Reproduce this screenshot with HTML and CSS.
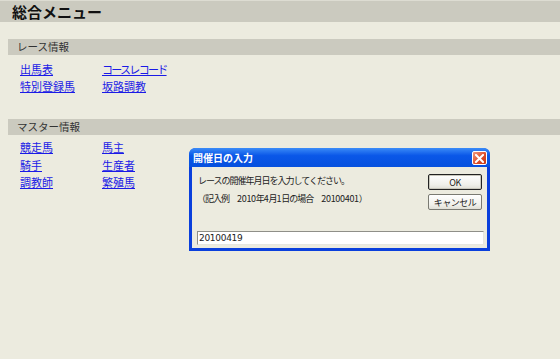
FILE: index.html
```html
<!DOCTYPE html>
<html lang="ja">
<head>
    <meta charset="UTF-8">
    <meta name="viewport" content="width=device-width, initial-scale=1.0">
    <title>総合メニュー</title>
    <link rel="stylesheet" href="styles.css">
</head>
<body>
<h1 class="page-title">総合メニュー</h1>

<div class="section">
    <div class="section-bar">レース情報</div>
    <div class="links">
        <a href="#">出馬表</a>
        <a href="#" class="kana">コースレコード</a>
        <a href="#">特別登録馬</a>
        <a href="#">坂路調教</a>
    </div>
</div>

<div class="section section-master">
    <div class="section-bar">マスター情報</div>
    <div class="links">
        <a href="#">競走馬</a>
        <a href="#">馬主</a>
        <a href="#">騎手</a>
        <a href="#">生産者</a>
        <a href="#">調教師</a>
        <a href="#">繁殖馬</a>
    </div>
</div>

<div class="dialog">
    <div class="dialog-title">
        <span>開催日の入力</span>
        <button class="close-btn" title="閉じる">
            <svg width="9" height="9" viewBox="0 0 9 9">
                <path d="M1 1 L8 8 M8 1 L1 8" stroke="#fff" stroke-width="2" stroke-linecap="square"/>
            </svg>
        </button>
    </div>
    <div class="dialog-body">
        <div class="dialog-row">
            <div class="dialog-text">
                <p>レースの開催年月日を入力してください。</p>
                <p>（記入例　<span class="num">2010</span>年<span class="num">4</span>月<span class="num">1</span>日の場合　<span class="num">20100401</span>）</p>
            </div>
            <div class="dialog-buttons">
                <button class="btn btn-default">OK</button>
                <button class="btn">キャンセル</button>
            </div>
        </div>
        <input type="text" class="dialog-input" value="20100419">
    </div>
</div>
</body>
</html>
```

FILE: styles.css
```css
body {
    margin: 0;
    background: #ecebdf;
    font-family: "Noto Sans CJK JP", "DejaVu Sans", sans-serif;
    font-size: 11px;
    color: #222;
    height: 359px;
}

.page-title {
    margin: 0;
    height: 21px;
    line-height: 21px;
    background: #cbcabf;
    border-top: 1px solid #dddcd2;
    padding-left: 12px;
    font-size: 15px;
    font-weight: bold;
    color: #111;
}

.section {
    margin-top: 17px;
}

.section-master {
    margin-top: 24px;
}

.section-bar {
    margin-left: 8px;
    height: 16px;
    line-height: 16px;
    padding-left: 9px;
    background: #cbcabf;
    font-size: 10.5px;
    color: #333;
}

.links {
    display: grid;
    grid-template-columns: 82px 120px;
    grid-auto-rows: 17px;
    padding: 6px 0 0 20px;
}

.section-master .links {
    grid-auto-rows: 17.5px;
    padding-top: 4px;
}

.links a {
    color: #1a1ae6;
    text-decoration: underline;
    font-size: 11px;
    line-height: 17px;
    justify-self: start;
}

.links a.kana {
    letter-spacing: -1.7px;
}

.dialog {
    position: absolute;
    left: 189px;
    top: 148px;
    width: 301px;
    height: 103px;
    box-sizing: border-box;
    background: #0a3fdc;
    border-radius: 7px 7px 0 0;
    padding: 0 3px 3px 3px;
    display: flex;
    flex-direction: column;
}

.dialog-title {
    height: 19px;
    flex: none;
    display: flex;
    align-items: center;
    justify-content: space-between;
    background: linear-gradient(#3b8bf7, #0a57e8 40%, #0650de);
    border-radius: 6px 6px 0 0;
    margin: 0 -3px;
    padding-left: 4px;
    padding-right: 3px;
    color: #fff;
    font-weight: bold;
    font-size: 10px;
}

.close-btn {
    width: 15px;
    height: 14px;
    padding: 0;
    border: 1px solid #fff;
    border-radius: 2px;
    background: linear-gradient(135deg, #f09a7c, #dd4b27 60%, #c43b16);
    display: flex;
    align-items: center;
    justify-content: center;
    margin-top: 1px;
}

.dialog-body {
    flex: 1;
    background: #ecebdf;
    padding: 8px 5px 3px 5px;
    display: flex;
    flex-direction: column;
}

.dialog-row {
    display: flex;
    justify-content: space-between;
}

.dialog-text p {
    margin: 0 0 7px 0;
    font-size: 9px;
    letter-spacing: -1px;
    line-height: 11px;
    color: #222;
}

.dialog-text .num {
    letter-spacing: -0.3px;
}

.dialog-text p:first-child {
    margin-left: 1px;
}

.dialog-buttons {
    display: flex;
    flex-direction: column;
    gap: 4px;
    margin-top: -1px;
}

.btn {
    width: 54px;
    height: 16px;
    padding: 0;
    font-family: "Noto Sans CJK JP", "DejaVu Sans", sans-serif;
    font-size: 9px;
    letter-spacing: -0.5px;
    background: linear-gradient(#ffffff, #f0f0ea 70%, #e0dfd6);
    border: 1px solid #7a7a72;
    border-radius: 2px;
    color: #222;
}

.btn-default {
    border: 1px solid #222;
    box-shadow: inset 0 0 0 1px #c9c8bd;
}

.dialog-input {
    display: block;
    margin-top: auto;
    width: 287px;
    height: 14px;
    box-sizing: border-box;
    padding: 0 1px;
    border: 1px solid #8f8f88;
    border-bottom-color: #e6e6e0;
    border-right-color: #e6e6e0;
    background: #fff;
    font-family: "DejaVu Sans", sans-serif;
    font-size: 9px;
    letter-spacing: -0.3px;
    color: #222;
}
```
